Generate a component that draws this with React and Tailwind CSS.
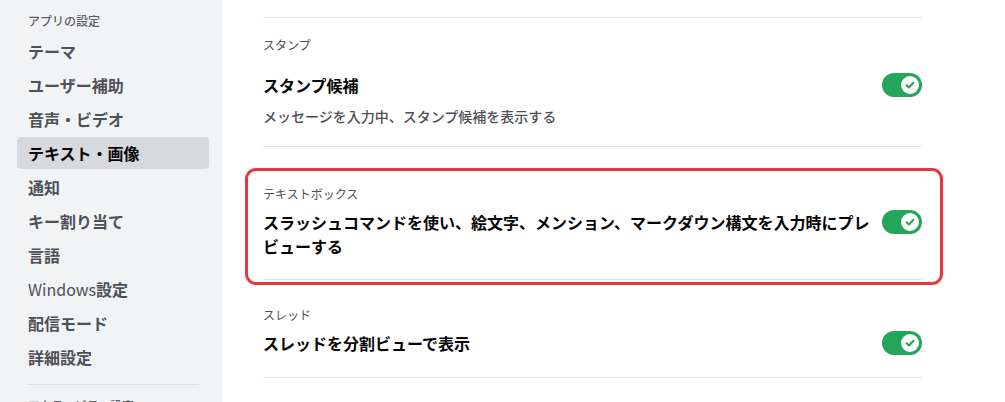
import React from "react";

function Toggle() {
  return (
    <div className="relative w-[40px] h-[24px] shrink-0 rounded-full bg-[#23a55a]">
      <div className="absolute right-[3px] top-[3px] w-[18px] h-[18px] rounded-full bg-white flex items-center justify-center">
        <svg width="12" height="12" viewBox="0 0 12 12" fill="none">
          <path d="M2.6 6.3 L4.9 8.5 L9.4 3.8" stroke="#23a55a" strokeWidth="2" strokeLinecap="round" strokeLinejoin="round" />
        </svg>
      </div>
    </div>
  );
}

const items = [
  "テーマ",
  "ユーザー補助",
  "音声・ビデオ",
  "テキスト・画像",
  "通知",
  "キー割り当て",
  "言語",
  "Windows設定",
  "配信モード",
  "詳細設定",
];

function Divider() {
  return <div className="h-px bg-[#e3e5e8]" />;
}

function Label({ text }) {
  if (text === "Windows設定") {
    return (
      <>
        <span className="font-normal">Windows</span>設定
      </>
    );
  }
  return text;
}

export default function App() {
  return (
    <div className="flex h-[402px] w-[1005px] overflow-hidden bg-white font-['Noto_Sans_CJK_JP','Noto_Sans',sans-serif]">
      <aside className="w-[222px] shrink-0 bg-[#f2f3f5] pl-[17px] pr-[13px] pt-[13px]">
        <div className="pl-[11px] text-[12px] leading-4 font-medium text-[#5c5e66] mb-[6px]">
          アプリの設定
        </div>
        <div className="flex flex-col gap-[2px]">
          {items.map((it) => (
            <div
              key={it}
              className={
                it === "テキスト・画像"
                  ? "rounded-[4px] bg-[#d7d9dc] px-[11px] py-[6px] text-[16px] leading-5 font-semibold text-[#060607]"
                  : "rounded-[4px] px-[11px] py-[6px] text-[16px] leading-5 font-semibold text-[#4e5058]"
              }
            >
              <Label text={it} />
            </div>
          ))}
        </div>
        <div className="mt-[11px] ml-[10px] mr-[10px] h-px bg-[#dcdee1]" />
        <div className="mt-[13px] pl-[11px] text-[12px] leading-4 font-medium text-[#5c5e66]">
          アクティビティ設定
        </div>
      </aside>

      <main className="flex-1 pl-[41px]">
        <div className="w-[659px]">
          <div className="mt-[17px]">
            <Divider />
          </div>

          <div className="pt-[19px] pb-[20px]">
            <div className="text-[12px] leading-4 text-[#4e5058]">スタンプ</div>
            <div className="mt-[20px] flex items-center justify-between">
              <div className="text-[16px] leading-6 font-bold text-[#060607]">スタンプ候補</div>
              <Toggle />
            </div>
            <div className="mt-[9px] text-[14px] leading-5 font-medium text-[#4e5058]">
              メッセージを入力中、スタンプ候補を表示する
            </div>
          </div>
          <Divider />

          <div className="relative">
            <div className="pt-[39px] pb-[21px]">
              <div className="text-[12px] leading-4 text-[#4e5058]">テキストボックス</div>
              <div className="mt-2 flex items-start">
                <div className="flex-1 text-[16px] leading-6 font-bold text-[#060607]">
                  スラッシュコマンドを使い、絵文字、メンション、マークダウン構文を入力時にプレビューする
                </div>
                <div className="ml-[8px]">
                  <Toggle />
                </div>
              </div>
            </div>
            <Divider />
            <div className="pointer-events-none absolute left-[-18px] right-[-21px] top-[21px] bottom-[-5px] rounded-[11px] border-[3px] border-[#e8383d]" />
          </div>

          <div className="pt-[27px] pb-[22px]">
            <div className="text-[12px] leading-4 text-[#4e5058]">スレッド</div>
            <div className="mt-2 flex items-center justify-between">
              <div className="text-[16px] leading-6 font-bold text-[#060607]">スレッドを分割ビューで表示</div>
              <Toggle />
            </div>
          </div>
          <Divider />
        </div>
      </main>
    </div>
  );
}
